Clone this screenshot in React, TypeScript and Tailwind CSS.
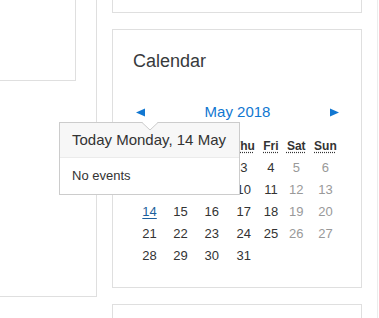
import React from 'react';

const weeks: (number | null)[][] = [
  [null, 1, 2, 3, 4, 5, 6],
  [7, 8, 9, 10, 11, 12, 13],
  [14, 15, 16, 17, 18, 19, 20],
  [21, 22, 23, 24, 25, 26, 27],
  [28, 29, 30, 31, null, null, null],
];

const days = ['Mon', 'Tue', 'Wed', 'Thu', 'Fri', 'Sat', 'Sun'];

function Arrow({ dir }: { dir: 'left' | 'right' }) {
  return (
    <svg width="9" height="9" viewBox="0 0 9 9" className="block">
      {dir === 'left' ? (
        <polygon points="9,0.5 9,8.5 0,4.5" fill="#1177d1" />
      ) : (
        <polygon points="0,0.5 0,8.5 9,4.5" fill="#1177d1" />
      )}
    </svg>
  );
}

function DayPopover() {
  return (
    <div className="absolute left-[59px] top-[122px] z-10 w-[181px] border border-[#cccccc] bg-white text-[#333333]">
      {/* notch */}
      <svg
        width="18"
        height="10"
        viewBox="0 0 18 10"
        className="absolute left-[82px] top-[-1px]"
      >
        <polygon points="0,0 8,8 16,0" fill="#ffffff" />
        <polyline points="0,0.5 8,8 16,0.5" fill="none" stroke="#cccccc" strokeWidth="1" />
      </svg>
      <div className="bg-[#f7f7f7] border-b border-[#ebebeb] px-3 py-2 text-[15px] leading-[18px]">
        Today Monday, 14 May
      </div>
      <div className="px-3 py-2 text-[13px] leading-[19.5px]">No events</div>
    </div>
  );
}

function CalendarCard() {
  return (
    <div className="mt-4 border border-[#dfdfdf] bg-white px-5 pt-5 pb-5">
      <h2 className="text-[18px] leading-[22px] text-[#373a3c]">Calendar</h2>
      <div className="mt-[28px] flex h-[24px] items-center justify-between">
        <span className="ml-[3px]">
          <Arrow dir="left" />
        </span>
        <span className="text-[15px] text-[#1177d1]">May 2018</span>
        <span className="mr-[2px]">
          <Arrow dir="right" />
        </span>
      </div>
      <table className="mt-[11px] w-full border-collapse text-center">
        <thead>
          <tr className="h-[22px]">
            {days.map((d) => (
              <th key={d} className="px-1 p-0 text-[12px] font-bold text-[#333333]">
                <abbr
                  title={d}
                  className="underline decoration-dotted decoration-[#333333] underline-offset-2 no-underline-skip"
                >
                  {d}
                </abbr>
              </th>
            ))}
          </tr>
        </thead>
        <tbody>
          {weeks.map((w, i) => (
            <tr key={i} className="h-[22px]">
              {w.map((n, j) => (
                <td
                  key={j}
                  className={
                    'p-0 text-[13px] leading-[22px] ' +
                    (j >= 5 ? 'text-[#999999]' : 'text-[#333333]')
                  }
                >
                  {n === 14 ? (
                    <span className="text-[#1d5f9c] underline underline-offset-2">14</span>
                  ) : (
                    n ?? ''
                  )}
                </td>
              ))}
            </tr>
          ))}
        </tbody>
      </table>
    </div>
  );
}

export default function App() {
  return (
    <div
      className="relative h-[318px] w-[379px] overflow-hidden bg-white"
      style={{ fontFamily: '"Liberation Sans", Arial, sans-serif' }}
    >
      <div className="flex">
        {/* left column */}
        <div className="h-[297px] w-[97px] shrink-0 border-r border-b border-[#dfdfdf]">
          <div className="h-[81px] w-[76px] border-r border-b border-[#dfdfdf]" />
        </div>

        {/* main column */}
        <div className="ml-[15px] w-[250px] shrink-0">
          <div className="h-[13px] border-x border-b border-[#dfdfdf]" />
          <CalendarCard />
          <div className="mt-4 h-[40px] border border-[#dfdfdf]" />
        </div>

        <div className="ml-[15px] h-[318px] w-px bg-[#ececec]" />
      </div>

      <DayPopover />
    </div>
  );
}
